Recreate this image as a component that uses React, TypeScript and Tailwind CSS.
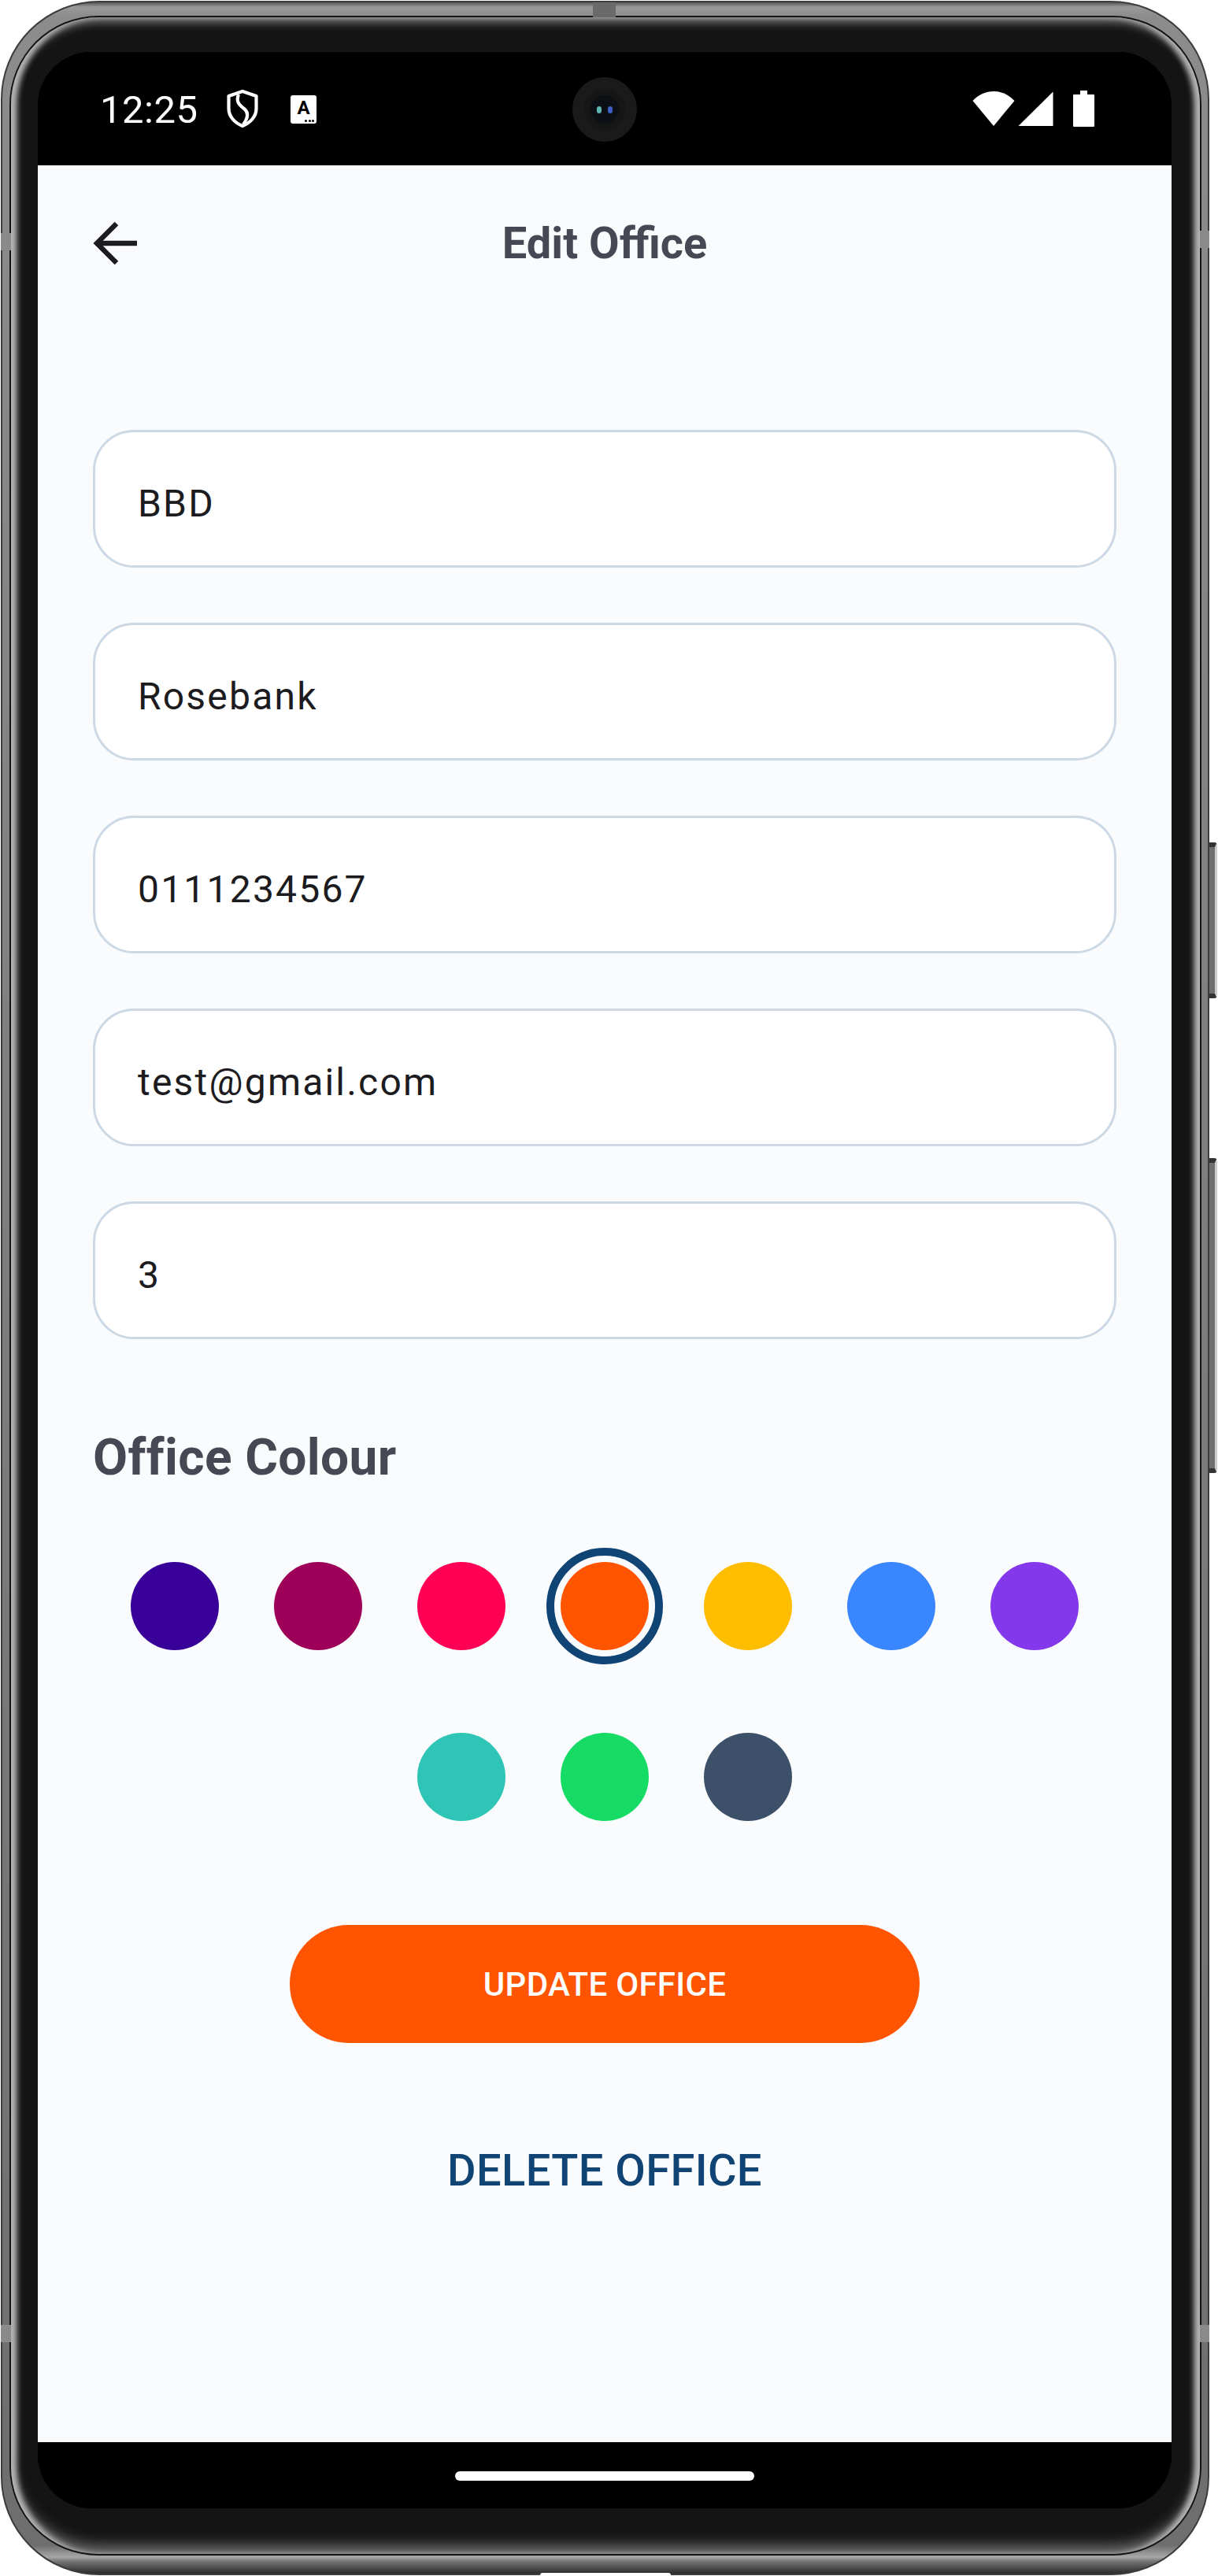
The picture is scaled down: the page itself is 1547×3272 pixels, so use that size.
import React from 'react';

const fields = ['BBD', 'Rosebank', '0111234567', 'test@gmail.com', '3'];

const colours = [
  { hex: 'bg-[#390099]' },
  { hex: 'bg-[#9e0059]' },
  { hex: 'bg-[#ff0054]' },
  { hex: 'bg-[#ff5400]', selected: true },
  { hex: 'bg-[#ffbd00]' },
  { hex: 'bg-[#3a86ff]' },
  { hex: 'bg-[#8338ec]' },
  { hex: 'bg-[#2ec4b6]' },
  { hex: 'bg-[#16db65]' },
  { hex: 'bg-[#3d5069]' },
];

function StatusBar() {
  return (
    <div className="relative flex h-[144px] shrink-0 items-center justify-between bg-black pl-[79px] pr-[98px] text-white">
      <div className="flex items-center">
        <span className="w-[121px] pt-[3px] text-[49px] leading-[56px] tracking-[0.5px]">12:25</span>
        {/* shield */}
        <svg className="ml-[40px]" width="40" height="48" viewBox="0 0 40 48" fill="none" stroke="#fff" strokeWidth="4.2">
          <path d="M20 2 L37.5 8 V24 C37.5 34 30 42 20 46 C10 42 2.5 34 2.5 24 V8 Z" strokeLinejoin="round" />
          <path d="M15 6 C11 16 17 20 22 24 C28 29 27 36 21 44" />
        </svg>
        {/* captions */}
        <div className="relative ml-[41px] mt-[2px] flex h-[36px] w-[33px] justify-center rounded-[3px] bg-white text-black">
          <span className="text-[24px] font-bold leading-[32px]">A</span>
          <div className="absolute bottom-[2px] right-[3px] flex gap-[1.5px]">
            <div className="size-[3px] rounded-full bg-black" />
            <div className="size-[3px] rounded-full bg-black" />
            <div className="size-[3px] rounded-full bg-black" />
          </div>
        </div>
      </div>

      {/* camera */}
      <div className="absolute left-[679px] top-[32px] flex size-[82px] items-center justify-center rounded-full bg-[#1a1a1a]">
        <div className="flex size-[52px] items-center justify-center rounded-full bg-[#161616]">
          <div className="flex h-[36px] w-[36px] items-center justify-center gap-[8px] rounded-full bg-[#0c0f14]">
            <div className="h-[9px] w-[6px] rounded-full bg-[#5fb5ae]" />
            <div className="h-[9px] w-[6px] rounded-full bg-[#3f5fc4]" />
          </div>
        </div>
      </div>

      <div className="flex items-center">
        <svg width="54" height="46" viewBox="0 0 54 46">
          <path d="M0.5 13 C15 -3 39 -3 53.5 13 L27 45 Z" fill="#fff" />
        </svg>
        <svg className="ml-[4px]" width="45" height="44" viewBox="0 0 45 44">
          <path d="M44.5 0.5 V44 H0.5 Z" fill="#fff" />
        </svg>
        <svg className="ml-[25px]" width="27" height="46" viewBox="0 0 27 46">
          <path d="M9 0 H18 V5 H26 Q27 5 27 6 V45 Q27 46 26 46 H1 Q0 46 0 45 V6 Q0 5 1 5 H9 Z" fill="#fff" />
        </svg>
      </div>
    </div>
  );
}

function Field({ value }: { value: string }) {
  return (
    <div className="flex h-[175px] items-center rounded-[52px] border-[3px] border-[#ccd8e4] bg-white pl-[54px] pt-[13px] text-[48px] leading-[56px] tracking-[2.2px] text-[#1c1b20]">
      {value}
    </div>
  );
}

function ColourPicker() {
  return (
    <div className="mt-[94px] flex flex-wrap justify-center gap-x-[70px] gap-y-[105px]">
      {colours.map((c, i) => (
        <div key={i} className={`relative size-[112px] rounded-full ${c.hex}`}>
          {c.selected && (
            <div className="absolute -inset-[18px] rounded-full border-[10px] border-[#0f4475]" />
          )}
        </div>
      ))}
    </div>
  );
}

function EditOffice() {
  return (
    <div className="flex-1 bg-[#fafbfd] px-[70px] pt-[59px]">
      <div className="grid h-[80px] grid-cols-[1fr_auto_1fr] items-center">
        <svg width="56" height="56" viewBox="0 0 56 56" fill="none" stroke="#1c1b20" strokeWidth="6.4">
          <path d="M56 28 H5" />
          <path d="M30 3 L5 28 L30 53" />
        </svg>
        <h1 className="text-[56px] font-bold leading-[80px] text-[#484854]">Edit Office</h1>
        <div />
      </div>

      <div className="mt-[197px] flex flex-col gap-[70px]">
        {fields.map((f) => (
          <Field key={f} value={f} />
        ))}
      </div>

      <h2 className="mt-[113px] text-[64px] font-bold leading-[76px] tracking-[0.35px] text-[#484854]">Office Colour</h2>

      <ColourPicker />

      <div className="flex flex-col items-center">
        <button className="mt-[132px] flex h-[150px] w-[800px] items-center justify-center rounded-full bg-[#ff5400] text-[42px] font-medium tracking-[0.3px] text-white">
          UPDATE OFFICE
        </button>
        <button className="mt-[129px] text-[56px] font-medium leading-[66px] tracking-[0.4px] text-[#0f4475]">DELETE OFFICE</button>
      </div>
    </div>
  );
}

export default function App() {
  return (
    <div className="relative h-[3272px] w-[1547px] overflow-hidden bg-white font-['Roboto',sans-serif]">
      {/* side keys */}
      <div className="absolute left-[1530px] top-[1070px] h-[198px] w-[16px] rounded-r-[4px] border-y-[6px] border-r-[3px] border-y-[#333] border-r-[#ccc] bg-[#6f6f6f]" />
      <div className="absolute left-[1530px] top-[1471px] h-[400px] w-[16px] rounded-r-[4px] border-y-[6px] border-r-[3px] border-y-[#333] border-r-[#ccc] bg-[#6f6f6f]" />

      {/* phone frame */}
      <div className="relative ml-px mt-px h-[3270px] w-[1535px] rounded-[125px] border-[2px] border-[#3c3c3c] bg-[linear-gradient(to_bottom,#555_0px,#9a9a9a_6px,#8c8c8c_17px,#6e6e6e_3230px,#a8a8a8_3245px,#777_3250px,#2a2a2a_3266px)] pb-[23px] pl-[9px] pr-[8px] pt-[17px]">
        {/* antenna slits */}
        <div className="absolute left-[750px] top-0 h-[19px] w-[29px] bg-[#6a6a6a]" />
        <div className="absolute -left-[2px] top-[293px] h-[22px] w-[13px] bg-[#8a8a8a]" />
        <div className="absolute -right-[2px] top-[290px] h-[22px] w-[12px] bg-[#8a8a8a]" />
        <div className="absolute -left-[2px] top-[2950px] h-[22px] w-[13px] bg-[#8a8a8a]" />
        <div className="absolute -right-[2px] top-[2950px] h-[22px] w-[12px] bg-[#8a8a8a]" />

        <div className="h-full rounded-[113px] bg-[#141414] p-[2px]">
          <div className="flex h-full flex-col rounded-[111px] bg-[#141414] pb-[56px] pl-[34px] pr-[36px] pt-[44px] shadow-[inset_9px_0_7px_-2px_#b5b5b5,inset_-9px_0_7px_-2px_#b5b5b5,inset_0_8px_12px_-2px_#808080,inset_0_-12px_18px_-2px_#777]">
            <div className="flex h-[3120px] flex-col overflow-hidden rounded-[68px] bg-black">
              <StatusBar />
              <EditOffice />
              <div className="flex h-[84px] shrink-0 items-center justify-center bg-black pt-[1px]">
                <div className="h-[12px] w-[380px] rounded-full bg-white" />
              </div>
            </div>
          </div>
        </div>

        {/* cut in the lower edge */}
        <div className="absolute bottom-[-2px] left-[683px] h-[3px] w-[166px] rounded-t-[3px] bg-white" />
      </div>
    </div>
  );
}
